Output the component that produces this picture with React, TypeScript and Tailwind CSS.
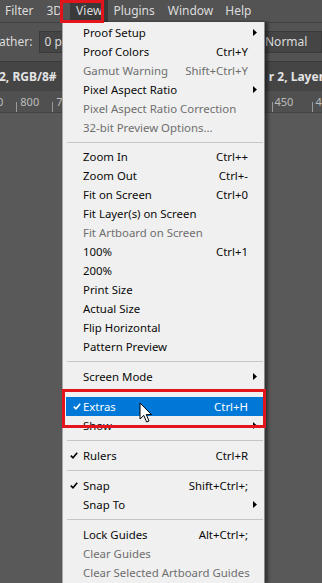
import React from 'react'

type Item =
  | { sep: true; h?: string }
  | {
      sep?: false
      label: string
      shortcut?: string
      sub?: boolean
      disabled?: boolean
      checked?: boolean
      active?: boolean
    }

const ITEMS: Item[] = [
  { label: 'Proof Setup', sub: true },
  { label: 'Proof Colors', shortcut: 'Ctrl+Y' },
  { label: 'Gamut Warning', shortcut: 'Shift+Ctrl+Y', disabled: true },
  { label: 'Pixel Aspect Ratio', sub: true },
  { label: 'Pixel Aspect Ratio Correction', disabled: true },
  { label: '32-bit Preview Options...', disabled: true },
  { sep: true, h: 'h-[10px]' },
  { label: 'Zoom In', shortcut: 'Ctrl++' },
  { label: 'Zoom Out', shortcut: 'Ctrl+-' },
  { label: 'Fit on Screen', shortcut: 'Ctrl+0' },
  { label: 'Fit Layer(s) on Screen' },
  { label: 'Fit Artboard on Screen', disabled: true },
  { label: '100%', shortcut: 'Ctrl+1' },
  { label: '200%' },
  { label: 'Print Size' },
  { label: 'Actual Size' },
  { label: 'Flip Horizontal' },
  { label: 'Pattern Preview' },
  { sep: true },
  { label: 'Screen Mode', sub: true },
  { sep: true },
  { label: 'Extras', shortcut: 'Ctrl+H', checked: true, active: true },
  { label: 'Show', sub: true },
  { sep: true },
  { label: 'Rulers', shortcut: 'Ctrl+R', checked: true },
  { sep: true },
  { label: 'Snap', shortcut: 'Shift+Ctrl+;', checked: true },
  { label: 'Snap To', sub: true },
  { sep: true },
  { label: 'Lock Guides', shortcut: 'Alt+Ctrl+;' },
  { label: 'Clear Guides', disabled: true },
  { label: 'Clear Selected Artboard Guides', disabled: true },
]

function Check({ white }: { white?: boolean }) {
  return (
    <svg width="8" height="7" viewBox="0 0 8 7" className="ml-[7px]">
      <path d="M0.8 3.6 L3 5.8 L7.2 0.8" fill="none" stroke={white ? '#fff' : '#000'} strokeWidth="1.6" />
    </svg>
  )
}

function Arrow() {
  return (
    <svg width="4" height="7" viewBox="0 0 4 7" className="absolute right-[7px] top-[6px]">
      <path d="M0 0 L4 3.5 L0 7 Z" fill="#000" />
    </svg>
  )
}

export default function App() {
  return (
    <div
      className="relative w-[322px] h-[583px] overflow-hidden bg-[#595959] flex flex-col"
      style={{ fontFamily: '"Noto Sans", "Open Sans", sans-serif' }}
    >
      {/* menu bar */}
      <div className="h-[22px] bg-[#535353] flex items-center text-[12px] text-[#dcdcdc] shrink-0">
        <span className="ml-[5px]">Filter</span>
        <span className="ml-[13px]">3D</span>
        <span className="ml-[8px] px-[6px] h-[22px] flex items-center bg-[#3a3a3a]">View</span>
        <span className="ml-[5px]">Plugins</span>
        <span className="ml-[13px]">Window</span>
        <span className="ml-[12px]">Help</span>
      </div>

      {/* options bar */}
      <div className="h-[40px] bg-[#535353] border-t border-[#404040] border-b border-b-[#3a3a3a] flex items-center text-[12px] text-[#dcdcdc] shrink-0">
        <span className="ml-[-1px]">ather:</span>
        <div className="ml-[7px] h-[22px] w-[60px] bg-[#454545] border border-[#3a3a3a] flex items-center pl-[4px]">0 px</div>
        <div className="ml-auto h-[22px] w-[62px] bg-[#454545] border border-[#3a3a3a] flex items-center pl-[4px]">Normal</div>
      </div>

      {/* tabs */}
      <div className="h-[29px] bg-[#454545] flex items-center text-[12px] font-bold text-[#e4e4e4] shrink-0">
        <span className="ml-[-1px]">2, RGB/8#</span>
        <span className="ml-auto mr-[-2px]">r 2, Layer</span>
      </div>

      {/* ruler */}
      <div className="h-[22px] bg-[#505050] border-b border-[#444] flex items-end text-[11px] text-[#bdbdbd] shrink-0">
        <span className="ml-[-3px] mb-[2px]">0</span>
        <span className="ml-[13px] w-px h-[10px] bg-[#9a9a9a]" />
        <span className="ml-[3px] mb-[2px]">800</span>
        <span className="ml-[13px] w-px h-[10px] bg-[#9a9a9a]" />
        <span className="ml-[3px] mb-[2px]">7</span>
        <span className="ml-auto w-px h-[10px] bg-[#9a9a9a]" />
        <span className="ml-[2px] mb-[2px]">450</span>
        <span className="ml-[19px] w-px h-[10px] bg-[#9a9a9a]" />
        <span className="ml-[2px] mb-[2px] mr-[-6px]">40</span>
      </div>

      <div className="flex-1 bg-[#595959]" />

      {/* dropdown menu */}
      <div className="absolute left-[62px] top-[22px] w-[203px] bottom-0 bg-[#f0f0f0] border-l border-[#a8a8a8] border-r border-r-[#8a8a8a] shadow-[3px_0_3px_rgba(0,0,0,0.45)] pt-[1px] text-[11.4px] text-[#0a0a0a]">
        {ITEMS.map((it, i) =>
          it.sep ? (
            <div key={i} className={(it.h ?? 'h-[11px]') + ' flex items-center pl-[4px] pr-[1px]'}>
              <div className="h-px w-full bg-[#c6c6c6]" />
            </div>
          ) : (
            <div
              key={i}
              className={
                'relative h-[19px] flex items-center ' +
                (it.active ? 'bg-[#0078d7] text-white ml-[3px]' : '') +
                (it.disabled ? ' text-[#6e6e6e]' : '')
              }
            >
              <div className={it.active ? 'w-[17px] flex items-center' : 'w-[20px] flex items-center'}>
                {it.checked && <Check white={it.active} />}
              </div>
              <span className="whitespace-nowrap">{it.label}</span>
              {it.shortcut && <span className="ml-auto mr-[16px] whitespace-nowrap">{it.shortcut}</span>}
              {it.sub && <Arrow />}
            </div>
          )
        )}
      </div>

      {/* red highlight boxes */}
      <div className="absolute left-[60px] top-0 w-[44px] h-[23px] border-[3px] border-[#e3141c]" />
      <div className="absolute left-[62px] top-[389px] w-[204px] h-[39px] border-[3px] border-[#e3141c]" />

      {/* cursor */}
      <svg width="14" height="22" viewBox="0 0 14 22" className="absolute left-[139px] top-[402px]">
        <path d="M1 1 L1 17 L4.8 13.4 L7.6 20 L10 19 L7.3 12.6 L12.5 12.6 Z" fill="#fff" stroke="#000" strokeWidth="1" strokeLinejoin="round" />
      </svg>
    </div>
  )
}
